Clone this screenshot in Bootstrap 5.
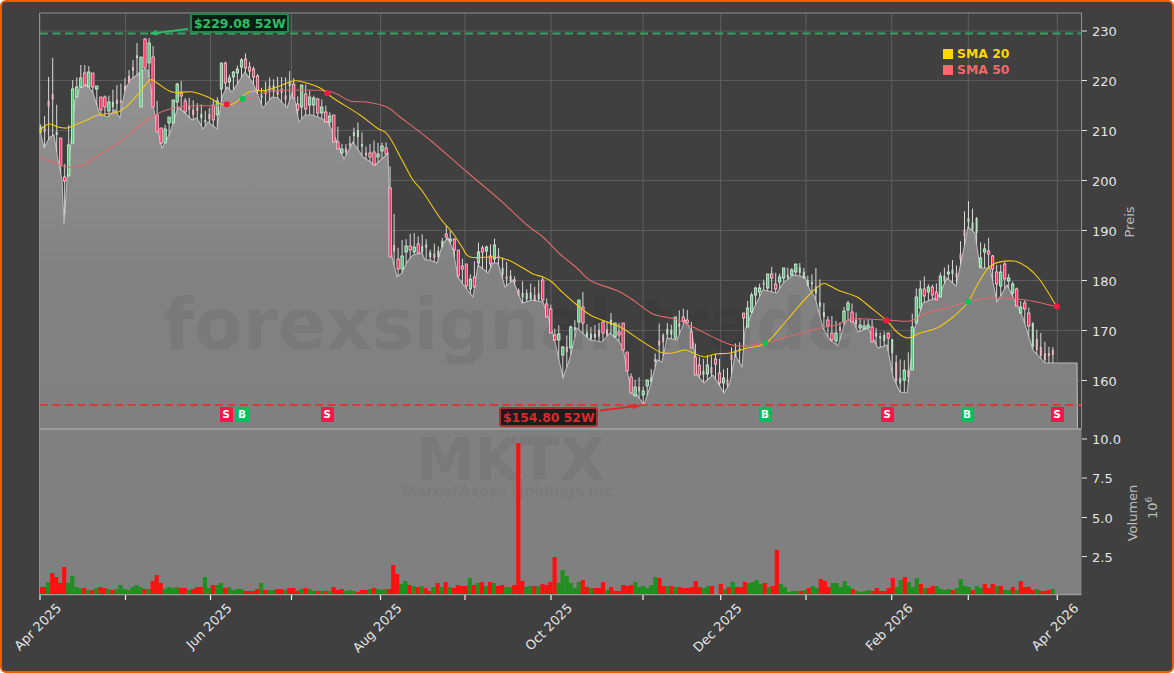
<!DOCTYPE html>
<html lang="de">

<head>
    <meta charset="UTF-8">
    <meta name="viewport" content="width=device-width, initial-scale=1.0">
    <title>MKTX Chart</title>
    <link href="https://cdn.jsdelivr.net/npm/bootstrap@5.3.3/dist/css/bootstrap.min.css" rel="stylesheet">
    <style>
        body { background: #fff; overflow: hidden; font-family: "DejaVu Sans", sans-serif; }
        .chart-frame { width: 1174px; height: 673px; background: #404040; border: 2px solid #f55a00; border-radius: 6px; overflow: hidden; }
        .chart-frame svg { width: 1170px; height: 669px; }
        .chart-frame text { font-family: "DejaVu Sans", sans-serif; }
        .tick-label { font-size: 13px; fill: #e4e4e4; }
        .axis-label { font-size: 13px; fill: #bdbdbd; }
        .callout { font-size: 12.4px; line-height: 1; font-weight: 700; padding: 3px 2px; border-radius: 3px; letter-spacing: 0; height: 20px; width: 99px; border-style: solid; border-width: 2px; }
        .callout-high { left: 188px; top: 11px; background: #0a1f14; color: #2ebd68; border-color: #1f8a50; }
        .callout-low { left: 497px; top: 405px; background: #1c1c1c; color: #d62c2c; border-color: #a83232; }
        .chart-legend { left: 941px; top: 44px; font-size: 12.4px; font-weight: 700; line-height: 16px; }
        .legend-swatch { width: 10px; height: 10px; }
        .sma20 { color: #ffd700; }
        .sma20 .legend-swatch { background: #ffd700; }
        .sma50 { color: #ef6a6a; }
        .sma50 .legend-swatch { background: #ff6b6b; }
        .signal { width: 13px; height: 15px; font-size: 10.5px; line-height: 15px; font-weight: 700; padding: 0; border-radius: 0; color: #fff; }
        .signal-s { background: #f5164a; }
        .signal-b { background: #00bf5f; }
    </style>
</head>

<body class="m-0">
    <div class="chart-frame position-relative">
        <svg id="chart" class="d-block" viewBox="2 2 1170 669"></svg>
        <span class="callout callout-high badge position-absolute">$229.08 52W</span>
        <span class="callout callout-low badge position-absolute">$154.80 52W</span>
        <div class="chart-legend position-absolute">
            <div class="sma20 d-flex align-items-center gap-1"><span class="legend-swatch"></span>SMA 20</div>
            <div class="sma50 d-flex align-items-center gap-1"><span class="legend-swatch"></span>SMA 50</div>
        </div>
        <div id="signals"></div>
    </div>

    <script>
        // pixel coordinates read off the chart: x,y,x,y...
        const lowLine = [40,130,44,148,50,137,54,135,58,160,62,180,64,225,67,180,71,143,75,100,80,88,87,85,93,93,100,115,108,117,115,110,120,118,125,90,130,80,137,75,142,70,148,70,154,110,158,132,162,148,170,133,178,107,185,113,192,120,197,118,203,129,208,122,217,129,222,97,227,87,232,92,245,72,253,83,263,108,272,97,278,98,287,108,293,90,299,122,305,115,312,115,318,117,328,122,337,142,344,159,353,142,363,157,375,165,383,158,388,153,390,220,392,257,397,277,402,273,407,262,413,255,422,253,425,260,430,260,437,263,443,243,448,238,453,250,458,277,465,287,473,297,478,265,488,273,493,263,498,263,505,287,513,280,522,303,532,300,543,302,548,317,555,342,563,378,570,358,577,328,590,340,602,342,610,333,618,340,623,348,627,370,632,394,637,395,644,405,650,387,657,360,662,362,667,338,677,340,685,320,692,332,697,375,704,383,713,375,724,393,730,383,735,355,742,367,745,330,753,310,763,290,777,293,783,283,793,275,805,277,810,290,815,297,823,328,830,340,838,346,845,322,852,318,858,332,868,328,878,348,887,345,893,377,900,392,907,393,915,327,923,303,938,297,947,278,956,286,963,253,968,227,975,233,980,268,990,268,997,302,1007,285,1017,305,1023,318,1033,350,1045,363,1057,363,1077,363];
        const highLine = [40,125,44,122,48,82,52,50,56,98,60,138,64,170,68,135,72,80,76,80,80,65,88,65,92,70,96,87,100,97,104,95,108,97,116,85,120,85,125,78,129,70,133,60,137,43,141,57,145,38,149,38,153,45,157,100,161,128,165,125,170,117,174,100,177,83,181,80,185,98,190,98,197,103,203,105,207,115,212,100,218,97,222,60,226,62,230,77,234,70,238,65,242,57,246,53,250,63,254,67,258,75,263,93,267,75,272,80,276,78,280,75,284,80,291,69,295,83,299,103,303,83,307,85,311,93,315,97,319,98,323,100,328,110,332,115,336,115,340,140,344,148,352,132,356,123,360,122,364,143,368,150,372,138,376,143,380,143,384,142,388,143,392,188,397,250,402,240,405,240,408,238,412,230,417,237,421,235,425,233,429,253,433,242,437,247,441,245,445,223,449,230,453,233,457,248,462,258,465,263,469,275,473,273,477,240,481,247,485,243,489,250,493,235,498,247,502,257,506,260,509,270,513,270,518,290,522,280,527,290,531,283,534,288,539,280,543,277,547,300,551,305,555,330,559,325,563,347,567,335,571,325,575,320,579,300,583,292,587,325,591,327,595,325,599,323,603,320,607,322,611,313,615,325,619,323,623,323,627,352,631,373,635,380,639,377,643,387,647,380,652,367,656,350,659,323,664,335,668,320,673,327,677,315,681,307,685,310,689,310,693,330,697,353,701,360,705,358,709,353,713,357,717,352,721,363,725,373,729,365,733,337,737,347,741,340,745,308,749,297,753,290,757,285,761,283,769,273,773,264,777,277,781,272,785,267,789,268,793,268,797,263,801,263,805,270,810,280,814,268,818,268,822,292,826,315,830,317,834,315,838,327,842,317,845,302,850,300,854,307,858,318,862,318,866,322,870,317,874,322,878,333,883,332,887,330,891,338,895,353,899,360,903,358,907,365,911,325,915,290,919,285,923,272,927,285,931,283,935,288,939,275,943,268,947,267,952,259,956,268,960,245,964,213,968,200,972,208,976,213,980,242,984,245,988,235,992,253,996,265,1000,265,1005,262,1009,275,1013,282,1017,288,1021,302,1025,300,1029,308,1033,323,1037,330,1041,333,1045,342,1049,347,1053,347,1057,347];
        const sma20Line = [40,132,43,127,50,124,58,127,67,128,75,125,87,120,98,115,118,112,128,105,140,92,150,80,157,83,172,92,193,92,210,98,218,103,227,105,235,103,247,93,257,91,267,90,280,86,293,81,303,82,320,88,333,98,360,115,377,128,388,135,402,160,413,180,423,192,440,218,452,232,462,247,470,257,493,257,508,260,523,268,533,274,543,277,552,282,560,290,577,305,592,316,620,327,640,340,660,352,672,353,685,350,693,353,705,357,715,354,730,353,747,348,766,343,787,320,807,297,822,284,830,286,840,291,857,297,870,307,886,320,898,333,908,338,920,333,937,328,953,317,968,302,980,280,992,265,1013,261,1027,267,1040,280,1057,307];
        const sma50Line = [40,158,50,161,67,167,83,165,100,154,120,142,140,125,157,114,170,109,187,106,227,105,253,97,273,91,327,91,350,101,367,102,387,107,400,117,430,140,467,172,500,200,527,225,543,237,560,254,577,268,591,281,618,291,633,300,653,314,675,319,693,327,717,339,737,346,765,343,787,337,820,328,837,325,853,319,887,320,910,321,927,313,950,307,968,302,987,298,1017,299,1037,302,1057,307];

        // x, body top, body bottom, colour (g/r, p = pale)
        const bodies = [[60,138,165,"r"],[64,177,181,"r"],[68,145,176,"g"],[72,89,143,"g"],[76,87,97,"g"],[80,78,87,"g"],[84,73,85,"r"],[88,72,87,"g"],[92,73,87,"r"],[96,86,89,"g"],[100,97,110,"r"],[104,97,107,"r"],[108,102,111,"g"],[141,57,107,"g"],[145,39,68,"r"],[149,43,63,"g"],[153,57,107,"r"],[157,115,132,"r"],[161,128,143,"r"],[165,129,143,"g"],[169,117,123,"g"],[173,100,123,"g"],[177,84,102,"g"],[181,93,96,"r"],[185,101,112,"r"],[213,105,120,"r"],[217,101,115,"g"],[222,63,89,"g"],[226,63,83,"r"],[230,78,82,"g"],[234,72,77,"g"],[238,69,73,"g"],[242,60,67,"g"],[246,59,68,"r"],[250,67,71,"r"],[254,69,77,"r"],[258,76,90,"r"],[295,84,98,"r"],[299,104,110,"r"],[303,85,107,"g"],[307,94,109,"r"],[311,97,105,"g"],[315,98,105,"g"],[319,99,113,"r"],[323,107,113,"g"],[327,112,122,"r"],[331,116,122,"g"],[335,115,142,"r"],[339,142,149,"r"],[343,149,153,"g"],[368,153,157,"r"],[372,143,155,"g"],[376,152,165,"r"],[380,154,157,"g"],[384,146,151,"g"],[388,148,154,"r"],[392,188,257,"r"],[397,259,269,"r"],[402,256,269,"g"],[405,246,252,"g"],[409,246,250,"r"],[413,247,252,"g"],[417,244,253,"r"],[445,234,237,"r"],[449,239,241,"g"],[453,239,250,"r"],[457,250,276,"r"],[461,266,269,"r"],[465,264,286,"r"],[469,279,289,"g"],[473,277,287,"r"],[477,252,263,"g"],[481,248,252,"r"],[485,247,251,"g"],[489,256,264,"r"],[493,245,259,"g"],[543,280,300,"r"],[546,304,317,"r"],[550,309,333,"r"],[555,335,340,"r"],[559,334,340,"g"],[563,347,355,"g"],[571,327,348,"g"],[579,300,322,"g"],[583,307,323,"r"],[603,322,333,"r"],[615,323,337,"g"],[619,332,335,"r"],[623,323,350,"r"],[627,352,371,"r"],[631,377,393,"r"],[635,387,396,"g"],[643,391,395,"g"],[647,380,386,"g"],[664,335,342,"p"],[677,317,338,"g"],[685,317,321,"r"],[689,320,323,"r"],[693,332,348,"r"],[697,357,375,"r"],[701,365,375,"r"],[709,365,374,"g"],[717,359,364,"r"],[721,373,383,"r"],[725,378,383,"g"],[745,313,318,"r"],[749,308,327,"g"],[753,295,312,"g"],[757,288,295,"g"],[761,288,292,"g"],[769,274,288,"g"],[773,274,278,"r"],[777,284,289,"r"],[781,277,282,"g"],[785,268,278,"g"],[793,270,275,"g"],[797,264,272,"g"],[826,320,326,"r"],[830,333,340,"r"],[834,333,341,"g"],[842,320,327,"g"],[846,311,322,"g"],[850,303,310,"g"],[854,312,322,"r"],[862,325,328,"g"],[866,326,329,"g"],[870,325,328,"g"],[874,327,342,"r"],[883,335,341,"p"],[887,333,338,"r"],[891,339,353,"p"],[895,362,381,"p"],[903,370,380,"g"],[911,327,370,"g"],[915,297,323,"g"],[919,289,308,"g"],[923,289,296,"r"],[927,287,292,"g"],[931,287,295,"r"],[935,292,300,"r"],[939,276,297,"g"],[947,272,274,"g"],[956,273,277,"p"],[976,218,233,"p"],[980,258,267,"g"],[984,249,252,"g"],[988,251,254,"r"],[992,256,269,"r"],[996,272,284,"r"],[1000,272,286,"g"],[1005,264,279,"r"],[1009,278,281,"g"],[1013,284,293,"g"],[1017,289,306,"r"],[1021,307,313,"g"],[1025,303,309,"r"],[1029,313,326,"r"],[1033,323,347,"p"],[1037,339,350,"p"],[1041,347,356,"p"],[1045,353,360,"p"],[1049,353,356,"p"],[1053,350,355,"p"],[1057,352,354,"g"]];

        // volume bars, start x, step and height in px with colour
        const volumeRuns = [
            [38, 4.02, "7r 7r 12g 21r 17r 11r 27r 11g 18g 7g 6g 6r 4g 4r 6g 7r 6r 5g 4r 5g 9g 5g 4g 7g 9g 7g 5r 5g 13r 19r 11r 5g 7g 6g 7g 6r 6r 4g 5r 7r 7r 17g 6g 9r 9g 11g 6r 7g 4g 5g 5g 3r 3r 3r 5r 11g 4r 4g 4g 5r 5r 4g 6r 6r 3r 5g 6r 5g 3g 3r 3g 3r 3g 7r 4r 5r 3g 4g 3g 2r 4r 4r 5g 6r 5g 4g"],
            [383, 4.035, "5g 5r 29r 20r 10g 13g 9r 8g 7r 8g 6r 3r 7g 11r 7g 12r 7g 6r 9r 8r 8r 16g 9r 11g 12r 8g 12r 11g 8r 9r 7g 7g 9r 151r 13r 7g 8g 8r 8g 10r 9r 12r 37r 11g 24g 18g 11g 6g 12g 14r 7r 6g 6r 6r 12r 4g 7r 3r 3r 9r 8r 9r 12g 7g 8g 6g 9g 17g 16r 8r 8g 8r 7g 7r 6r 6r 7r 13r 7r 6g 8g 8r"],
            [718.7, 4.0, "10r 5g 7r 12g 7r 7r 12r 11g 12g 14g 10g 11r 7g 8r 44r 10g 7g 2g 3g 3g 3r 4g 6r 8g 6g 15r 13r 7r 11g 11g 7g 13g 8g 5r 3g 2g 3g 4g 3r 6r 3r 3r 6r 16r 7g 14g 17r 12g 7g 16g 10r 6g 6r 8r 8g 5g 4g 5g 4r 6g 15g 8g 7g 4r 8g 6g 10r 6r 10r 8g 8r 4g 4g 7r 4g 13r 7r 7r 4r 5g 3r 3r 4r 5g"]
        ];

        const signals = [[226, "S"], [242, "B"], [327, "S"], [765, "B"], [887, "S"], [967, "B"], [1057, "S"]];
        const monthTicks = [[40, "Apr 2025"], [125.5], [210.5, "Jun 2025"], [291.5], [380.5, "Aug 2025"], [465], [551, "Oct 2025"], [643], [720.7, "Dec 2025"], [806], [891.7, "Feb 2026"], [968.3], [1057.3, "Apr 2026"]];
        const priceTicks = [[230, 31], [220, 80.5], [210, 130.5], [200, 180.5], [190, 230.5], [180, 280.5], [170, 330.5], [160, 380.5]];
        const volumeTicks = [["10.0", 439], ["7.5", 478], ["5.0", 517.5], ["2.5", 556.5]];

        function pairs(flat) {
            const out = [];
            for (let i = 0; i < flat.length; i += 2) out.push([flat[i], flat[i + 1]]);
            return out;
        }
        function lineAt(pts, x) {
            for (let i = 1; i < pts.length; i++) {
                if (x <= pts[i][0]) {
                    const t = (x - pts[i - 1][0]) / (pts[i][0] - pts[i - 1][0]);
                    return pts[i - 1][1] + t * (pts[i][1] - pts[i - 1][1]);
                }
            }
            return pts[pts.length - 1][1];
        }
        // catmull-rom so the averages stay smooth
        function smooth(pts) {
            let d = `M${pts[0][0]} ${pts[0][1]}`;
            for (let i = 0; i < pts.length - 1; i++) {
                const a = pts[i - 1] || pts[i], b = pts[i], c = pts[i + 1], e = pts[i + 2] || c;
                d += `C${(b[0] + (c[0] - a[0]) / 6).toFixed(1)} ${(b[1] + (c[1] - a[1]) / 6).toFixed(1)} ${(c[0] - (e[0] - b[0]) / 6).toFixed(1)} ${(c[1] - (e[1] - b[1]) / 6).toFixed(1)} ${c[0]} ${c[1]}`;
            }
            return d;
        }

        const low = pairs(lowLine), high = pairs(highLine);
        let svg = `<defs><linearGradient id="areaFill" x1="0" y1="0" x2="0" y2="1"><stop offset="0" stop-color="#949494"/><stop offset="0.55" stop-color="#828282"/><stop offset="1" stop-color="#808080"/></linearGradient>
            <marker id="arrowGreen" markerUnits="userSpaceOnUse" markerWidth="8" markerHeight="8" refX="7" refY="3" orient="auto"><path d="M0 0L7 3L0 6z" fill="#2ebd68"/></marker>
            <marker id="arrowRed" markerUnits="userSpaceOnUse" markerWidth="8" markerHeight="8" refX="7" refY="3" orient="auto"><path d="M0 0L7 3L0 6z" fill="#e02828"/></marker></defs>`;

        // grid
        monthTicks.forEach(t => svg += `<path d="M${t[0]} 13V428" stroke="#5f5f5f" stroke-width="1"/>`);
        priceTicks.forEach(t => svg += `<path d="M40 ${t[1]}H1081" stroke="#5c5c5c" stroke-width="1"/>`);

        // price area and volume panel
        svg += `<path d="M40 428L${low.map(p => p.join(" ")).join("L")}L1077.5 428Z" fill="url(#areaFill)"/>`;
        svg += `<path d="M${low.map(p => p.join(" ")).join("L")}L1077.5 428" fill="none" stroke="#b8b8b8" stroke-width="1.1"/>`;
        svg += `<rect x="40" y="429" width="1041.5" height="165" fill="#808080"/>`;
        svg += `<path d="M39.5 595V13H1081.5V428" fill="none" stroke="#8f8f8f" stroke-width="1"/>`;
        svg += `<path d="M39.5 429H1081.5" stroke="#9b9b9b" stroke-width="2"/>`;
        svg += `<path d="M39.5 594.5H1081.5" stroke="#9b9b9b" stroke-width="1.5"/>`;

        // watermarks
        svg += `<text x="509" y="349" text-anchor="middle" font-size="71" font-weight="700" fill="#000" opacity="0.05">forexsignal.trade</text>`;
        svg += `<text x="510.5" y="480" text-anchor="middle" font-size="58.5" font-weight="700" fill="#000" opacity="0.05">MKTX</text>`;
        svg += `<text x="507.5" y="497" text-anchor="middle" font-size="16.5" fill="#000" opacity="0.05">MarketAxess Holdings Inc</text>`;

        // candles
        let seed = 7;
        const rnd = () => (seed = (seed * 16807) % 2147483647) / 2147483647;
        for (let i = 0; i < 253; i++) {
            const x = 40.6 + i * 4.017;
            const hi = lineAt(high, x), lo = lineAt(low, x);
            const body = bodies.find(b => Math.abs(b[0] - x) <= 2);
            const top = body ? Math.min(body[1], hi) : hi;
            const bottom = body ? Math.max(body[2], lo) : lo;
            const kind = body ? body[3] : "";
            svg += `<path d="M${x.toFixed(1)} ${top.toFixed(1)}V${bottom.toFixed(1)}" stroke="#d8d8d8" stroke-width="1"/>`;
            if (kind === "g" || kind === "r") {
                svg += `<rect x="${(x - 1.2).toFixed(1)}" y="${body[1]}" width="2.4" height="${body[2] - body[1]}" fill="${kind === "g" ? "#5cc47f" : "#ff3366"}" stroke="${kind === "g" ? "#e8fff0" : "#ffe0e8"}" stroke-width="0.7"/>`;
            } else {
                const mid = body ? body[1] : hi + (lo - hi) * (0.25 + rnd() * 0.4);
                const h = body ? body[2] - body[1] : 2 + rnd() * 5;
                svg += `<rect x="${(x - 1).toFixed(1)}" y="${mid.toFixed(1)}" width="2" height="${h.toFixed(1)}" fill="${rnd() > 0.5 ? "#e6b8c4" : "#bcdcc6"}"/>`;
            }
        }

        // dashed 52 week levels and arrows
        svg += `<path d="M40 33.5H1081" stroke="#37a063" stroke-width="2" stroke-dasharray="8 4.5"/>`;
        svg += `<path d="M40 405H1081" stroke="#d83a3a" stroke-width="2" stroke-dasharray="8 4.5"/>`;
        svg += `<path d="M188 29L150 33.6" stroke="#2ebd68" stroke-width="1.8" marker-end="url(#arrowGreen)"/>`;
        svg += `<path d="M600 410.5L640 405.6" stroke="#e02828" stroke-width="1.8" marker-end="url(#arrowRed)"/>`;

        // moving averages and crossing dots
        svg += `<path d="${smooth(pairs(sma50Line))}" fill="none" stroke="#e0686a" stroke-width="1.1"/>`;
        svg += `<path d="${smooth(pairs(sma20Line))}" fill="none" stroke="#f2c811" stroke-width="1.1"/>`;
        [[226.7, 104.3, "#ff1744"], [242.7, 98.7, "#00c853"], [327.3, 93.3, "#ff1744"], [765.5, 343, "#00c853"], [886.5, 320.5, "#ff1744"], [968, 301.7, "#00c853"], [1057, 306.5, "#ff1744"]]
            .forEach(d => svg += `<circle cx="${d[0]}" cy="${d[1]}" r="3" fill="${d[2]}"/>`);

        // volume
        volumeRuns.forEach(run => {
            run[2].split(" ").forEach((v, k) => {
                const h = parseInt(v), x = Math.max(run[0] + k * run[1], 40);
                const w = Math.min(4.2, run[0] + k * run[1] + 4.2 - x);
                svg += `<rect x="${x.toFixed(1)}" y="${594 - h}" width="${w.toFixed(1)}" height="${h}" fill="${v.endsWith("r") ? "#ff0f0f" : "#1f8f1f"}"/>`;
            });
        });

        // axes
        monthTicks.forEach(t => {
            svg += `<path d="M${t[0]} 595V600" stroke="#f0f0f0" stroke-width="1.2"/>`;
            if (t[1]) svg += `<text class="tick-label" text-anchor="end" transform="translate(${t[0] + 22} 609) rotate(-45)">${t[1]}</text>`;
        });
        priceTicks.forEach(t => {
            svg += `<path d="M1082 ${t[1]}H1087" stroke="#e4e4e4" stroke-width="1"/>`;
            svg += `<text class="tick-label" x="1092" y="${t[1] + 5}">${t[0]}</text>`;
        });
        volumeTicks.forEach(t => {
            svg += `<path d="M1082 ${t[1]}H1087" stroke="#e4e4e4" stroke-width="1"/>`;
            svg += `<text class="tick-label" x="1092" y="${t[1] + 5}">${t[0]}</text>`;
        });
        svg += `<text class="axis-label" text-anchor="middle" transform="translate(1134 222) rotate(-90)">Preis</text>`;
        svg += `<text class="axis-label" text-anchor="middle" transform="translate(1137 513) rotate(-90)">Volumen</text>`;
        svg += `<text class="axis-label" transform="translate(1157 519) rotate(-90)">10<tspan font-size="9" dy="-5">6</tspan></text>`;

        document.getElementById("chart").innerHTML = svg;

        // S / B markers under the chart
        document.getElementById("signals").innerHTML = signals.map(s =>
            `<span class="signal signal-${s[1].toLowerCase()} badge position-absolute" style="left:${s[0] - 8.5}px;top:405px">${s[1]}</span>`).join("");
    </script>
    <script src="https://cdn.jsdelivr.net/npm/bootstrap@5.3.3/dist/js/bootstrap.bundle.min.js"></script>
</body>

</html>
